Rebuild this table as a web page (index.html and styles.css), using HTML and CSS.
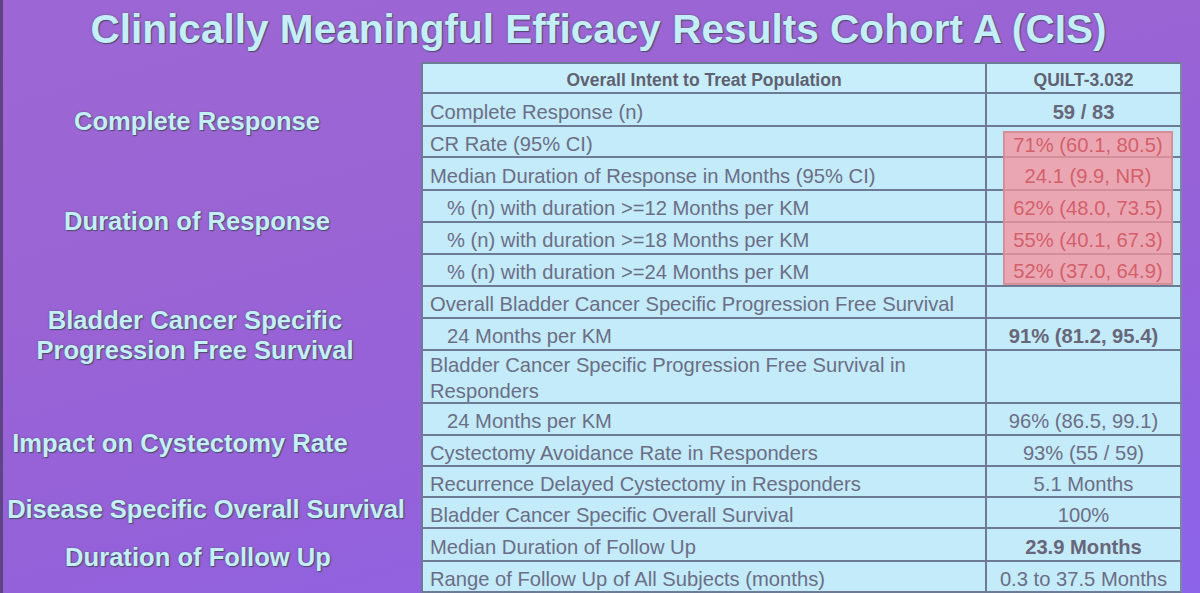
FILE: index.html
```html
<!DOCTYPE html>
<html lang="en">
<head>
<meta charset="utf-8">
<title>Clinically Meaningful Efficacy Results Cohort A (CIS)</title>
<link rel="stylesheet" href="styles.css">
</head>
<body>
<div class="slide">
  <h1 class="title">Clinically Meaningful Efficacy Results Cohort A (CIS)</h1>
  <div class="grid">
    <div class="hd c1 r1">Overall Intent to Treat Population</div>
    <div class="hd c2 r1">QUILT-3.032</div>

    <div class="lbl l-cr">Complete Response</div>
    <div class="lbl l-dor">Duration of Response</div>
    <div class="lbl l-pfs">Bladder Cancer Specific<br>Progression Free Survival</div>
    <div class="lbl l-cys">Impact on Cystectomy Rate</div>
    <div class="lbl l-os">Disease Specific Overall Survival</div>
    <div class="lbl l-fu">Duration of Follow Up</div>

    <div class="cell c1">Complete Response (n)</div>
    <div class="cell c2 bold">59 / 83</div>

    <div class="cell c1">CR Rate (95% CI)</div>
    <div class="cell c2 hlcell first"><span class="hl">71% (60.1, 80.5)</span></div>

    <div class="cell c1">Median Duration of Response in Months (95% CI)</div>
    <div class="cell c2 hlcell"><span class="hl">24.1 (9.9, NR)</span></div>

    <div class="cell c1 ind">% (n) with duration &gt;=12 Months per KM</div>
    <div class="cell c2 hlcell"><span class="hl">62% (48.0, 73.5)</span></div>

    <div class="cell c1 ind">% (n) with duration &gt;=18 Months per KM</div>
    <div class="cell c2 hlcell"><span class="hl">55% (40.1, 67.3)</span></div>

    <div class="cell c1 ind">% (n) with duration &gt;=24 Months per KM</div>
    <div class="cell c2 hlcell last"><span class="hl">52% (37.0, 64.9)</span></div>

    <div class="cell c1">Overall Bladder Cancer Specific Progression Free Survival</div>
    <div class="cell c2"></div>

    <div class="cell c1 ind">24 Months per KM</div>
    <div class="cell c2 bold">91% (81.2, 95.4)</div>

    <div class="cell c1 two">Bladder Cancer Specific Progression Free Survival in Responders</div>
    <div class="cell c2"></div>

    <div class="cell c1 ind">24 Months per KM</div>
    <div class="cell c2">96% (86.5, 99.1)</div>

    <div class="cell c1">Cystectomy Avoidance Rate in Responders</div>
    <div class="cell c2">93% (55 / 59)</div>

    <div class="cell c1">Recurrence Delayed Cystectomy in Responders</div>
    <div class="cell c2">5.1 Months</div>

    <div class="cell c1">Bladder Cancer Specific Overall Survival</div>
    <div class="cell c2">100%</div>

    <div class="cell c1">Median Duration of Follow Up</div>
    <div class="cell c2 bold">23.9 Months</div>

    <div class="cell c1">Range of Follow Up of All Subjects (months)</div>
    <div class="cell c2">0.3 to 37.5 Months</div>
  </div>
</div>
</body>
</html>
```

FILE: styles.css
```css
* { box-sizing: border-box; }
html, body { margin: 0; padding: 0; }
body {
  width: 1200px;
  height: 593px;
  overflow: hidden;
  font-family: "Liberation Sans", Arial, sans-serif;
}
.slide {
  width: 1200px;
  height: 593px;
  background: linear-gradient(165deg, #9c67d4 0%, #9b64d4 30%, #9461da 65%, #8c64ea 100%);
  border-left: 3px solid #5d4585;
  display: flex;
  flex-direction: column;
}
.title {
  margin: 0;
  height: 62px;
  padding-top: 5px;
  padding-right: 6px;
  font-size: 40.6px;
  line-height: 48px;
  font-weight: bold;
  color: #c4eff9;
  text-align: center;
  text-shadow: 1px 1px 1px #4f4a6a, 0 0 2px #5a5577;
}
.grid {
  display: grid;
  grid-template-columns: 418px 564px 197px;
  grid-template-rows: 32px 33px 31px 33px 32px 32px 32px 32px 32px 53px 32px 31px 31px 31px 33px 31px;
}
.lbl {
  grid-column: 1;
  display: flex;
  align-items: center;
  justify-content: center;
  text-align: center;
  padding-right: 30px;
  font-size: 25.6px;
  line-height: 30px;
  font-weight: bold;
  color: #c4eff9;
  text-shadow: 1px 1px 1px #4f4a6a, 0 0 2px #5a5577;
  white-space: nowrap;
}
.l-cr { grid-row: 2 / 4; padding-bottom: 10px; }
.l-dor { grid-row: 4 / 8; padding-bottom: 4px; }
.l-pfs { grid-row: 8 / 11; padding-bottom: 22px; padding-right: 34px; }
.l-cys { grid-row: 11 / 14; padding-bottom: 16px; padding-right: 64px; }
.l-os { grid-row: 14 / 15; padding-bottom: 10px; padding-right: 12px; letter-spacing: -0.15px; }
.l-fu { grid-row: 15 / 17; padding-bottom: 8px; padding-right: 28px; }

.hd, .cell {
  background: #c3ebf9;
  border-bottom: 2px solid #6d7b97;
  border-left: 2px solid #6d7b97;
  display: flex;
  align-items: center;
  color: #6b6e86;
  font-size: 20.2px;
  white-space: nowrap;
  padding-top: 5px;
}
.hd {
  background: #c9eefb;
  border-top: 2px solid #6d7b97;
  font-size: 17.5px;
  font-weight: bold;
  color: #5f6172;
  justify-content: center;
  padding-top: 4px;
}
.c1 { grid-column: 2; padding-left: 7px; }
.c2 { grid-column: 3; justify-content: center; border-right: 2px solid #7c88a2; }
.hd.c1 { padding-left: 0; }
.ind { padding-left: 24px; }
.two {
  white-space: normal;
  line-height: 26px;
  padding-right: 40px;
  padding-top: 3px;
}
.bold { font-weight: bold; color: #68667a; }

.hlcell {
  align-items: stretch;
  padding: 0 7px 0 16px;
}
.hl {
  flex: 1;
  display: flex;
  align-items: center;
  justify-content: center;
  padding-top: 5px;
  background: #eaa7b3;
  border-left: 2px solid #d68e9a;
  border-right: 2px solid #d68e9a;
  border-bottom: 2px solid #d4909a;
  margin-bottom: -2px;
  color: #d45f6a;
}
.first .hl { margin-top: 4px; border-top: 2px solid #d68e9a; padding-top: 1px; }
.last .hl { margin-bottom: 0; }
```
